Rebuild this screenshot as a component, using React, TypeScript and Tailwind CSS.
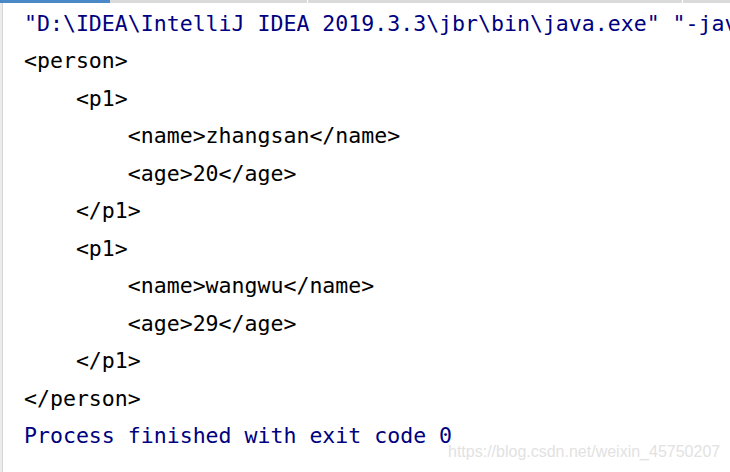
import React from "react";

const lines: { text: string; blue?: boolean }[] = [
  { text: '"D:\\IDEA\\IntelliJ IDEA 2019.3.3\\jbr\\bin\\java.exe" "-javaagent', blue: true },
  { text: "<person>" },
  { text: "    <p1>" },
  { text: "        <name>zhangsan</name>" },
  { text: "        <age>20</age>" },
  { text: "    </p1>" },
  { text: "    <p1>" },
  { text: "        <name>wangwu</name>" },
  { text: "        <age>29</age>" },
  { text: "    </p1>" },
  { text: "</person>" },
  { text: "Process finished with exit code 0", blue: true },
];

export default function App() {
  return (
    <div className="relative w-[730px] h-[472px] overflow-hidden bg-white flex flex-col">
      <div className="flex h-[3px] shrink-0">
        <div className="w-[110px] bg-[#4a88c7]" />
        <div className="w-[197px] bg-[#dadada]" />
        <div className="w-px bg-white" />
        <div className="w-[374px] bg-[#dadada]" />
        <div className="w-px bg-white" />
        <div className="flex-1 bg-[#dadada]" />
      </div>
      <div className="flex flex-1 min-w-0">
        <div className="w-[3px] bg-[#ececec] border-r border-[#d6d6d6] shrink-0" />
        <div
          className="pl-[21px] pt-[2px] text-[21.55px] leading-[37.45px] whitespace-pre text-black overflow-hidden min-w-0"
          style={{ fontFamily: '"DejaVu Sans Mono", monospace' }}
        >
          {lines.map((l, i) => (
            <div key={i} className={l.blue ? "text-[#000080]" : "text-black"}>
              {l.text}
            </div>
          ))}
        </div>
      </div>
      <div
        className="absolute left-[448px] top-[442px] text-[16px] leading-[20px] text-[#e2e2e2] whitespace-nowrap"
        style={{ fontFamily: '"Liberation Sans", Arial, sans-serif' }}
      >
        https://blog.csdn.net/weixin_45750207
      </div>
    </div>
  );
}
